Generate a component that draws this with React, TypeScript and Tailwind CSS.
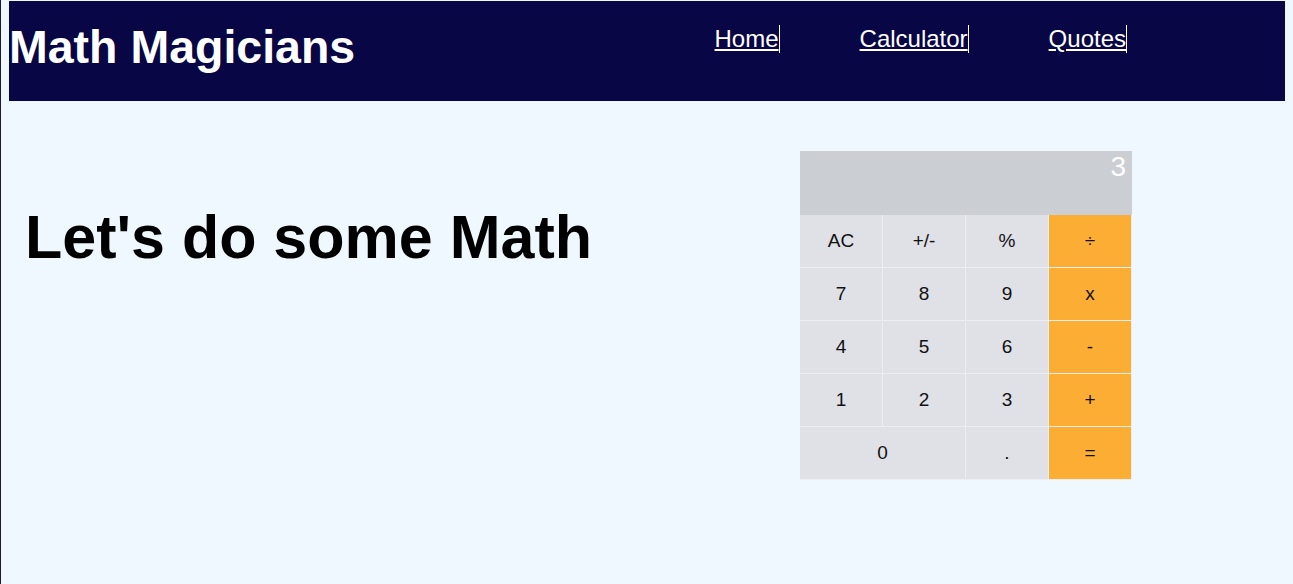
import React from "react";

const F = { fontFamily: '"Liberation Sans", Arial, sans-serif' };

type Key = { label: string; orange?: boolean; wide?: boolean };

const keys: Key[] = [
  { label: "AC" }, { label: "+/-" }, { label: "%" }, { label: "÷", orange: true },
  { label: "7" }, { label: "8" }, { label: "9" }, { label: "x", orange: true },
  { label: "4" }, { label: "5" }, { label: "6" }, { label: "-", orange: true },
  { label: "1" }, { label: "2" }, { label: "3" }, { label: "+", orange: true },
  { label: "0", wide: true }, { label: "." }, { label: "=", orange: true },
];

export default function App() {
  return (
    <div
      className="min-h-[584px] bg-[#f0f8ff] border-l border-[#1c1a2e] px-[8px] pt-px"
      style={F}
    >
      <header className="h-[100px] bg-[#080644] flex items-start">
        <h1 className="mt-[20px] text-[46.5px] font-bold text-white leading-[1.15]">
          Math Magicians
        </h1>
        <nav className="ml-auto mr-[158px] mt-[24px] flex items-start gap-[80px] text-[24px] leading-[1.15] text-white">
          <a href="#" className="underline border-r border-white">Home</a>
          <a href="#" className="underline border-r border-white">Calculator</a>
          <a href="#" className="underline border-r border-white">Quotes</a>
        </nav>
      </header>
      <main className="flex items-start">
        <h2 className="ml-[16px] mt-[101px] text-[61px] font-bold text-black leading-[1.15]">
          Let's do some Math
        </h2>
        <div className="ml-auto mr-[153px] mt-[50px] w-[332px]">
          <div className="h-[64px] bg-[#cbced3] text-white text-[28px] text-right pr-[6px] leading-[1.15]">
            3
          </div>
          <div className="grid grid-cols-4">
            {keys.map((k) => (
              <button
                key={k.label}
                className={
                  "h-[53px] flex items-center justify-center text-[19px] text-[#111] border-r border-b border-[#eeeef2] " +
                  (k.orange ? "bg-[#fbae33] " : "bg-[#e0e0e7] ") +
                  (k.wide ? "col-span-2" : "")
                }
              >
                {k.label}
              </button>
            ))}
          </div>
        </div>
      </main>
    </div>
  );
}
